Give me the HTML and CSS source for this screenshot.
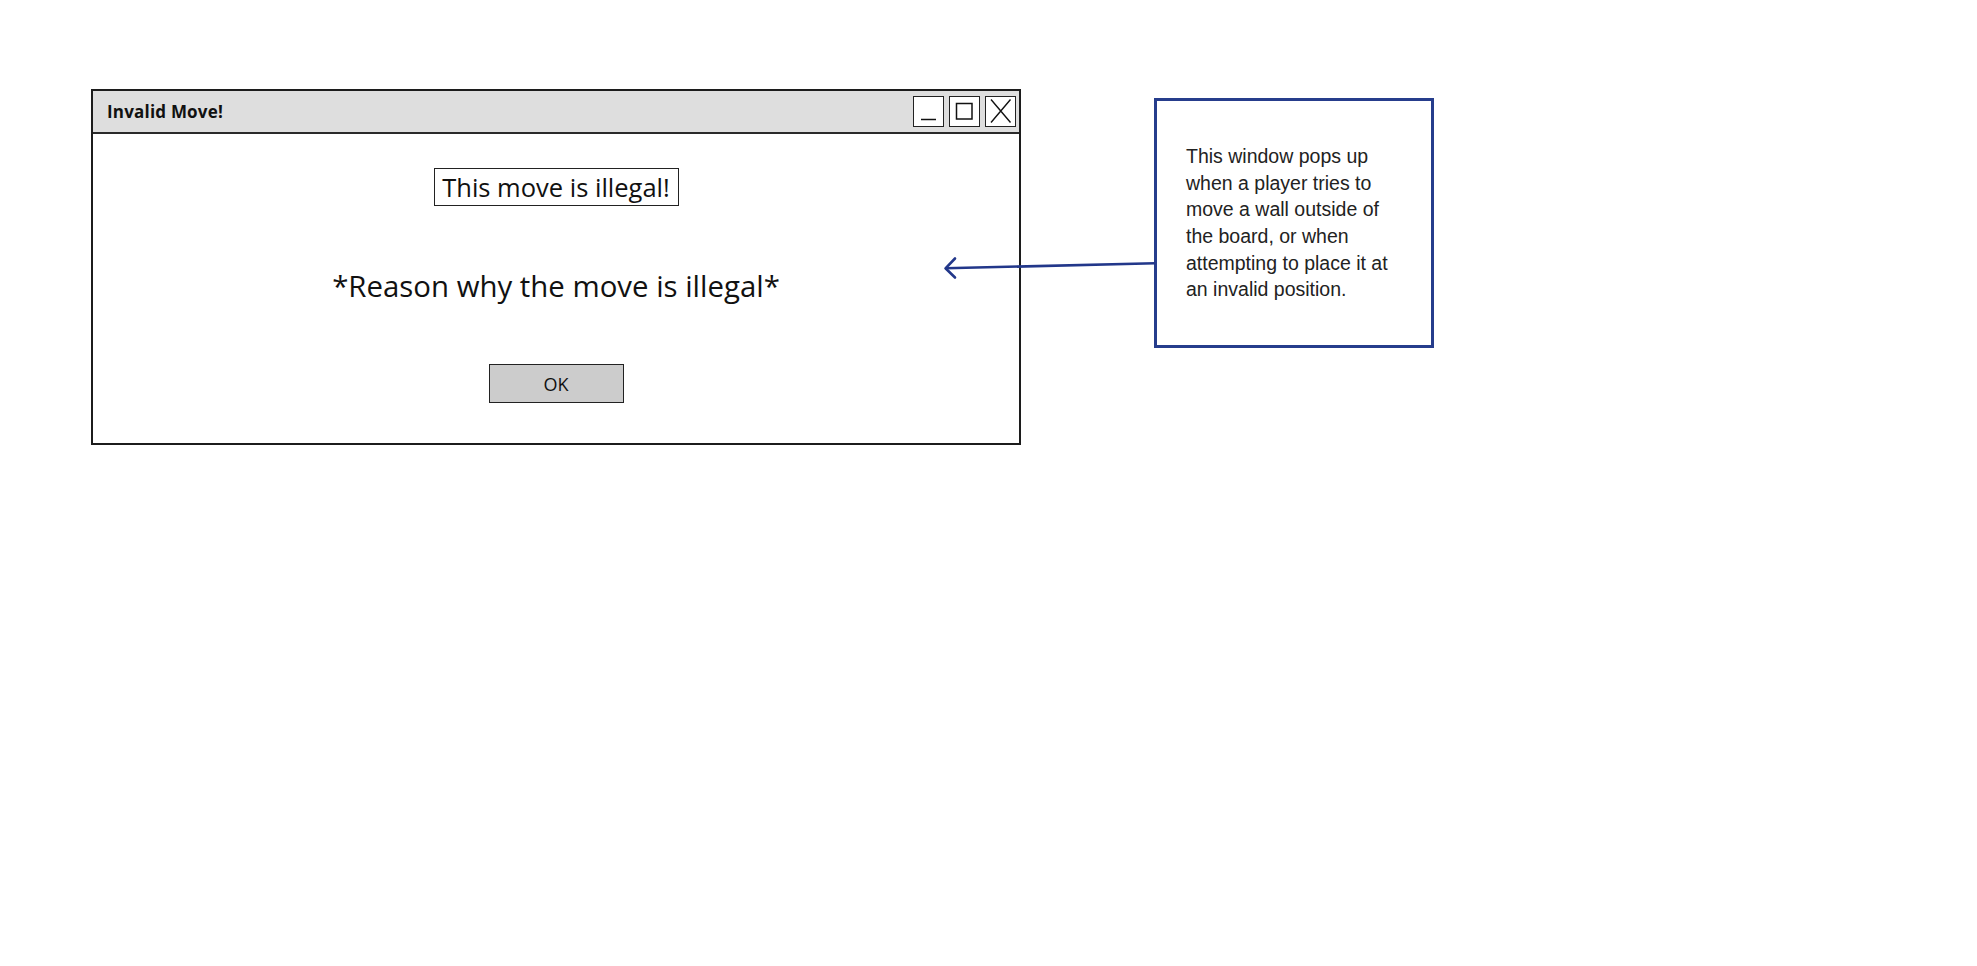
FILE: index.html
```html
<!DOCTYPE html>
<html lang="en">
<head>
<meta charset="utf-8">
<title>Invalid Move!</title>
<link rel="stylesheet" href="styles.css">
</head>
<body>
<div class="scene">
  <div class="window">
    <div class="titlebar">
      <span class="title">Invalid Move!</span>
      <div class="controls">
        <div class="ctl">
          <svg width="31" height="31" viewBox="0 0 31 31"><line x1="8" y1="23.5" x2="23" y2="23.5" stroke="#111" stroke-width="1.5"/></svg>
        </div>
        <div class="ctl">
          <svg width="31" height="31" viewBox="0 0 31 31"><rect x="7.5" y="7.5" width="15.5" height="15.5" fill="none" stroke="#111" stroke-width="1.5"/></svg>
        </div>
        <div class="ctl">
          <svg width="31" height="31" viewBox="0 0 31 31"><path d="M6 3.5 L25.5 26.5 M25.5 3.5 L6 26.5" fill="none" stroke="#111" stroke-width="1.4"/></svg>
        </div>
      </div>
    </div>
    <div class="content">
      <div class="headline">This move is illegal!</div>
      <div class="reason">*Reason why the move is illegal*</div>
      <div class="ok">OK</div>
    </div>
  </div>
  <div class="note">
    <p>This window pops up when a player tries to move a wall outside of the board, or when attempting to place it at an invalid position.</p>
  </div>
  <svg class="arrow" width="220" height="30" viewBox="0 0 220 30">
    <path d="M5 13.3 L215 8.3" fill="none" stroke="#22378a" stroke-width="2.6"/>
    <path d="M15 3.5 L5.5 13.3 L15 22.5" fill="none" stroke="#22378a" stroke-width="2.6" stroke-linecap="round" stroke-linejoin="round"/>
  </svg>
</div>
</body>
</html>
```
FILE: styles.css
```css
html, body {
  margin: 0;
  padding: 0;
  background: #ffffff;
}

.scene {
  position: relative;
  display: flex;
  align-items: flex-start;
  gap: 133px;
  padding: 89px 0 0 91px;
  font-family: "Open Sans", "DejaVu Sans", sans-serif;
  color: #111;
}

.window {
  width: 930px;
  height: 356px;
  box-sizing: border-box;
  border: 2px solid #1c1c1c;
  background: #fff;
  display: flex;
  flex-direction: column;
}

.titlebar {
  height: 41px;
  background: #dedede;
  border-bottom: 2px solid #2a2a2a;
  display: flex;
  align-items: center;
  justify-content: space-between;
  padding: 0 3px 0 14px;
}

.title {
  font-weight: 700;
  font-size: 17px;
  letter-spacing: 0.2px;
}

.controls {
  display: flex;
  gap: 5px;
}

.ctl {
  width: 31px;
  height: 31px;
  box-sizing: border-box;
  border: 1.5px solid #222;
  background: #fff;
  display: flex;
  align-items: center;
  justify-content: center;
}

.ctl svg {
  display: block;
  flex: none;
}

.content {
  display: flex;
  flex-direction: column;
  align-items: center;
}

.headline {
  margin-top: 34px;
  width: 245px;
  height: 38px;
  box-sizing: border-box;
  border: 1.5px solid #222;
  display: flex;
  align-items: center;
  justify-content: center;
  font-size: 25.5px;
}

.reason {
  margin-top: 60px;
  font-size: 29.4px;
  line-height: 40px;
}

.ok {
  margin-top: 58px;
  width: 135px;
  height: 39px;
  box-sizing: border-box;
  border: 1.5px solid #222;
  background: #cccccc;
  display: flex;
  align-items: center;
  justify-content: center;
  font-size: 18px;
}

.note {
  margin-top: 9px;
  width: 280px;
  height: 250px;
  box-sizing: border-box;
  border: 3px solid #263d8c;
  padding: 0 20px 0 29px;
  display: flex;
  align-items: center;
}

.note p {
  margin: 0;
  font-family: "Liberation Sans", Arial, sans-serif;
  font-size: 19.5px;
  line-height: 26.7px;
  color: #222;
}

.arrow {
  position: absolute;
  left: 940px;
  top: 255px;
}
```
